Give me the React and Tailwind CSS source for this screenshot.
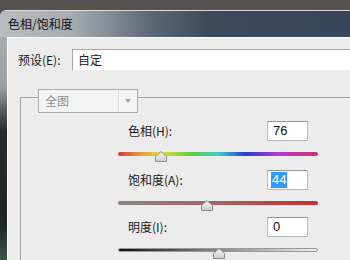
import React from 'react';

const Thumb = ({ left }) => (
  <svg
    className="absolute top-[-1px]"
    style={{ left: left - 6 }}
    width="12"
    height="11"
    viewBox="0 0 12 11"
  >
    <defs>
      <linearGradient id="thumbFill" x1="0" y1="0" x2="0" y2="1">
        <stop offset="0" stopColor="#f4f4f4" />
        <stop offset="1" stopColor="#cfcfcf" />
      </linearGradient>
    </defs>
    <polygon points="6,0.5 11.5,5.5 11.5,10.5 0.5,10.5 0.5,5.5" fill="url(#thumbFill)" stroke="#8c8c8c" strokeWidth="1" />
  </svg>
);

const SliderRow = ({ label, value, selected, track, thumb, rowClass }) => (
  <div className={`w-[200px] ${rowClass || ''}`}>
    <div className="flex items-center justify-between h-[20px]">
      <span className="pl-[10px]">{label}</span>
      <div className="mr-[10px] w-[41px] h-[20px] bg-white border border-[#b5bec7] border-t-[#8e99a5] flex items-center pl-[3px] font-['Liberation_Sans',sans-serif] text-[13px] text-[#111]">
        {selected ? (
          <span className="bg-[#3399ff] text-white px-[1px] leading-[16px]">{value}</span>
        ) : (
          <span className="pl-[2px]">{value}</span>
        )}
      </div>
    </div>
    <div className={`relative mt-[11px] h-[4px] w-[200px] rounded-full ${track}`}>
      <Thumb left={thumb} />
    </div>
  </div>
);

export default function App() {
  return (
    <div className="w-[350px] h-[260px] overflow-hidden bg-[#57524f] pt-[10px] font-['Noto_Sans_CJK_SC',sans-serif] text-[12px] text-[#1a1a1a]">
      <div className="h-[250px] rounded-tl-[6px] overflow-hidden flex flex-col border-t border-[#d9dde0]">
        <div className="h-[26px] shrink-0 bg-[linear-gradient(90deg,#b8bcc0_0px,#a7adb3_70px,#5d6975_150px,#3c4959_210px,#37465a_350px)] flex items-center pl-[8px] text-[#111]">
          <span>色相/饱和度</span>
        </div>
        <div className="flex flex-1">
          <div className="w-[7px] shrink-0 bg-[linear-gradient(180deg,#a6abaf_0px,#9aa0a4_50px,#51575a_75px,#262b2e_95px,#1e2622_190px,#3c5a45_222px)]" />
          <div className="flex-1 bg-[#ececec] border-l border-t border-white">
            <div className="flex items-center pt-[11px] pl-[10px]">
              <span className="w-[54px]">预设(E):</span>
              <div className="flex-1 h-[21px] bg-white border-t border-l border-[#a9a9a9] flex items-center pl-[5px]">
                自定
              </div>
            </div>

            <div className="ml-[12px] mt-[19px] flex flex-col">
              <div className="flex">
                <div className="w-[18px] mt-[8px] h-[16px] border-t border-l border-[#a0a0a0]" />
                <div className="w-[100px] h-[24px] bg-[#f4f4f4] border border-[#adadad] flex items-center">
                  <span className="flex-1 pl-[6px] text-[#8e8e8e]">全图</span>
                  <div className="w-[19px] h-full border-l border-[#dedede] flex items-center justify-center">
                    <svg width="6" height="4" viewBox="0 0 6 4">
                      <polygon points="0,0 6,0 3,3.5" fill="#a0a0a0" />
                    </svg>
                  </div>
                </div>
                <div className="flex-1 mt-[8px] border-t border-[#a0a0a0]" />
              </div>
              <div className="border-l border-[#a0a0a0] pl-[97px] pt-[8px] h-[200px]">
                <SliderRow
                  label="色相(H):"
                  value="76"
                  track="bg-[linear-gradient(90deg,#d23b3b_0%,#e7a13a_12%,#dede3a_22%,#5cce3a_37%,#3ad0c8_50%,#2a3ad0_64%,#b43ad0_80%,#d0306a_100%)]"
                  thumb={43}
                />
                <SliderRow
                  rowClass="mt-[14px]"
                  label="饱和度(A):"
                  value="44"
                  selected
                  track="bg-[linear-gradient(90deg,#8c8282_0%,#a46868_45%,#c42e2e_100%)]"
                  thumb={89}
                />
                <SliderRow
                  rowClass="mt-[12px]"
                  label="明度(I):"
                  value="0"
                  track="bg-[linear-gradient(90deg,#101010_0%,#7c7c7c_45%,#efefef_100%)] border border-[#9a9a9a]"
                  thumb={100}
                />
              </div>
            </div>
          </div>
        </div>
      </div>
    </div>
  );
}
